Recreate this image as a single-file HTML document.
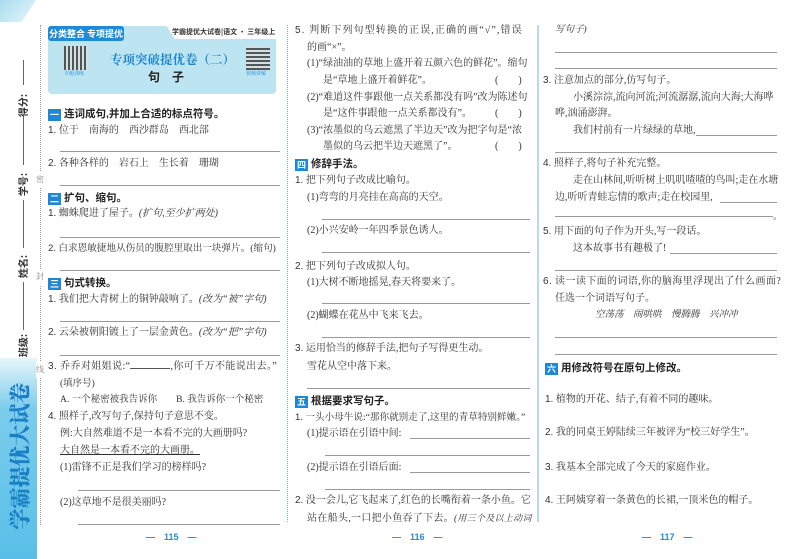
<!DOCTYPE html>
<html><head><meta charset="utf-8">
<style>
*{margin:0;padding:0;box-sizing:border-box}
body{width:800px;height:559px;overflow:hidden;background:#fff;position:relative;font-family:"Liberation Serif","Noto Serif CJK SC",serif;color:#333;font-size:10px}
.t{position:absolute;white-space:nowrap;line-height:16px;height:16px}
.l{position:absolute;height:1px;background:#9a9a9a}
.h{font-family:"Liberation Sans","Noto Sans CJK SC",sans-serif;font-weight:bold;color:#222;font-size:10.5px}
.b{display:inline-block;width:13px;height:12px;background:#1e88d8;color:#fff;font-size:9px;line-height:12px;text-align:center;margin-right:3px;vertical-align:-1px;font-family:"Noto Sans CJK SC",sans-serif}
.n{font-family:"Liberation Sans",sans-serif}
.pg{position:absolute;color:#2a8ad6;font-family:"Liberation Sans",sans-serif;font-size:9px;font-weight:bold}
.vl{position:absolute;width:1px;background:#666}
.lab{position:absolute;transform:rotate(-90deg);font-family:"Noto Sans CJK SC",sans-serif;font-weight:bold;font-size:10px;color:#333;white-space:nowrap}
</style></head><body>
<div style="position:absolute;left:0;top:0;width:36px;height:22px;background:linear-gradient(135deg,#a8dcef,#e8f6fb);clip-path:polygon(0 0,100% 0,60% 100%,0 100%)"></div>
<div style="position:absolute;left:0;top:358px;width:37px;height:201px;background:linear-gradient(180deg,#e6f6fb 0%,#7cccec 25%,#58bfe8 100%)"></div>
<div style="position:absolute;left:-58px;top:443px;width:155px;height:26px;transform:rotate(-90deg);font-family:'Noto Serif CJK SC',serif;font-weight:900;color:#1a7fc4;font-size:21px;line-height:26px;text-align:center;white-space:nowrap">学霸提优大试卷</div>
<div class="vl" style="left:23px;top:60px;height:25px"></div>
<div class="lab" style="left:11px;top:98px">得分:</div>
<div class="vl" style="left:23px;top:117px;height:48px"></div>
<div class="lab" style="left:11px;top:177px">学号:</div>
<div class="vl" style="left:23px;top:200px;height:48px"></div>
<div class="lab" style="left:11px;top:259px">姓名:</div>
<div class="vl" style="left:23px;top:282px;height:48px"></div>
<div class="lab" style="left:11px;top:338px">班级:</div>
<div style="position:absolute;left:40px;top:25px;height:500px;border-left:1px dotted #999"></div>
<div class="t" style="left:36px;top:172px;font-size:8px;color:#888;background:#fff">密</div>
<div class="t" style="left:36px;top:269px;font-size:8px;color:#888;background:#fff">封</div>
<div class="t" style="left:36px;top:362px;font-size:8px;color:#888;background:#fff">线</div>
<div style="position:absolute;left:287px;top:25px;height:497px;border-left:1px dotted #6ab8e8"></div>
<div style="position:absolute;left:537px;top:25px;height:497px;border-left:2px solid #b6dcf3"></div>

<div style="position:absolute;left:48px;top:26px;width:228px;height:68px;background:#bde5f1;border-radius:4px"></div>
<div style="position:absolute;left:48px;top:26px;width:76px;height:15px;background:#1e8ad8;border-radius:3px;color:#fff;font-family:'Noto Sans CJK SC',sans-serif;font-weight:bold;font-size:9px;line-height:15px;text-align:center">分类整合 专项提优</div>
<div style="position:absolute;left:166px;top:25px;width:112px;height:14px;background:#fff;clip-path:polygon(0 0,100% 0,100% 100%,8% 100%)"></div>
<div class="t" style="left:172px;top:26px;font-size:7px;line-height:12px;font-family:'Noto Sans CJK SC',sans-serif;font-weight:bold;color:#333">学霸提优大试卷|语文 · 三年级上</div>
<div style="position:absolute;left:64px;top:46px;width:24px;height:24px;background:repeating-linear-gradient(90deg,#333 0 2px,#ddd 2px 4px);opacity:.8"></div>
<div class="t" style="left:64px;top:71px;font-size:5px;line-height:8px;color:#1e88d8">专题训练</div>
<div style="position:absolute;left:246px;top:46px;width:24px;height:24px;background:repeating-linear-gradient(0deg,#333 0 2px,#ddd 2px 4px);opacity:.8"></div>
<div class="t" style="left:246px;top:71px;font-size:5px;line-height:8px;color:#1e88d8">视频讲解</div>
<div class="t" style="left:110px;top:50px;width:116px;text-align:center;font-size:12.5px;line-height:18px;color:#1a86d0;font-weight:bold;font-family:'Noto Serif CJK SC',serif">专项突破提优卷（二）</div>
<div class="t h" style="left:148px;top:68px;font-size:12px;line-height:18px">句　子</div>

<!-- col1 -->
<div class="t h" style="left:48px;top:106px"><span class="b">一</span>连词成句,并加上合适的标点符号。</div>
<div class="t" style="left:48px;top:123px"><span class="n">1.</span> 位于　南海的　西沙群岛　西北部</div>
<div class="l" style="left:60px;top:151px;width:220px"></div>
<div class="t" style="left:48px;top:156px"><span class="n">2.</span> 各种各样的　岩石上　生长着　珊瑚</div>
<div class="l" style="left:60px;top:185px;width:220px"></div>
<div class="t h" style="left:48px;top:190px"><span class="b">二</span>扩句、缩句。</div>
<div class="t" style="left:48px;top:206px"><span class="n">1.</span> 蜘蛛爬进了屋子。<i>(扩句,至少扩两处)</i></div>
<div class="l" style="left:60px;top:237px;width:220px"></div>
<div class="t" style="left:48px;top:241px;font-size:9.6px"><span class="n">2.</span> 白求恩敏捷地从伤员的腹腔里取出一块弹片。(缩句)</div>
<div class="l" style="left:60px;top:270px;width:220px"></div>
<div class="t h" style="left:48px;top:275px"><span class="b">三</span>句式转换。</div>
<div class="t" style="left:48px;top:292px"><span class="n">1.</span> 我们把大青树上的铜钟敲响了。<i>(改为“被”字句)</i></div>
<div class="l" style="left:60px;top:321px;width:220px"></div>
<div class="t" style="left:48px;top:325px"><span class="n">2.</span> 云朵被朝阳镀上了一层金黄色。<i>(改为“把”字句)</i></div>
<div class="l" style="left:60px;top:355px;width:220px"></div>
<div class="t" style="left:48px;top:359px;letter-spacing:.4px"><span class="n">3.</span> 乔乔对姐姐说:“<span style="display:inline-block;width:40px;border-bottom:1px solid #555"></span>,你可千万不能说出去。”</div>
<div class="t" style="left:60px;top:376px;font-size:9.5px">(填序号)</div>
<div class="t" style="left:60px;top:392px;font-size:9.5px">A. 一个秘密被我告诉你　　B. 我告诉你一个秘密</div>
<div class="t" style="left:48px;top:409px"><span class="n">4.</span> 照样子,改写句子,保持句子意思不变。</div>
<div class="t" style="left:60px;top:426px">例:大自然难道不是一本看不完的大画册吗?</div>
<div class="t" style="left:60px;top:443px;text-decoration:underline">大自然是一本看不完的大画册。</div>
<div class="t" style="left:60px;top:460px">(1)雷锋不正是我们学习的榜样吗?</div>
<div class="l" style="left:78px;top:490px;width:202px"></div>
<div class="t" style="left:60px;top:495px">(2)这草地不是很美丽吗?</div>
<div class="l" style="left:78px;top:524px;width:202px"></div>
<div class="pg" style="left:146px;top:530px">—　115　—</div>

<!-- col2 -->
<div class="t" style="left:295px;top:23px;letter-spacing:1.1px"><span class="n">5.</span> 判断下列句型转换的正误,正确的画“√”,错误</div>
<div class="t" style="left:307px;top:40px">的画“×”。</div>
<div class="t" style="left:307px;top:56px">(1)“绿油油的草地上盛开着五颜六色的鲜花”。缩句</div>
<div class="t" style="left:323px;top:73px">是“草地上盛开着鲜花”。</div><div class="t" style="left:495px;top:73px">(　　)</div>
<div class="t" style="left:307px;top:90px">(2)“难道这件事跟他一点关系都没有吗”改为陈述句</div>
<div class="t" style="left:323px;top:106px">是“这件事跟他一点关系都没有”。</div><div class="t" style="left:495px;top:106px">(　　)</div>
<div class="t" style="left:307px;top:123px">(3)“浓墨似的乌云遮黑了半边天”改为把字句是“浓</div>
<div class="t" style="left:323px;top:139px">墨似的乌云把半边天遮黑了”。</div><div class="t" style="left:495px;top:139px">(　　)</div>
<div class="t h" style="left:295px;top:156px"><span class="b">四</span>修辞手法。</div>
<div class="t" style="left:295px;top:173px"><span class="n">1.</span> 把下列句子改成比喻句。</div>
<div class="t" style="left:307px;top:190px">(1)弯弯的月亮挂在高高的天空。</div>
<div class="l" style="left:322px;top:219px;width:208px"></div>
<div class="t" style="left:307px;top:223px">(2)小兴安岭一年四季景色诱人。</div>
<div class="l" style="left:322px;top:252px;width:208px"></div>
<div class="t" style="left:295px;top:259px"><span class="n">2.</span> 把下列句子改成拟人句。</div>
<div class="t" style="left:307px;top:275px">(1)大树不断地摇晃,春天将要来了。</div>
<div class="l" style="left:322px;top:303px;width:208px"></div>
<div class="t" style="left:307px;top:308px">(2)蝴蝶在花丛中飞来飞去。</div>
<div class="l" style="left:322px;top:337px;width:208px"></div>
<div class="t" style="left:295px;top:341px"><span class="n">3.</span> 运用恰当的修辞手法,把句子写得更生动。</div>
<div class="t" style="left:307px;top:359px">雪花从空中落下来。</div>
<div class="l" style="left:307px;top:388px;width:223px"></div>
<div class="t h" style="left:295px;top:393px"><span class="b">五</span>根据要求写句子。</div>
<div class="t" style="left:295px;top:410px;font-size:9.6px"><span class="n">1.</span> 一头小母牛说:“那你就别走了,这里的青草特别鲜嫩。”</div>
<div class="t" style="left:307px;top:426px">(1)提示语在引语中间:</div>
<div class="l" style="left:410px;top:438px;width:120px"></div>
<div class="l" style="left:325px;top:455px;width:205px"></div>
<div class="t" style="left:307px;top:460px">(2)提示语在引语后面:</div>
<div class="l" style="left:410px;top:472px;width:120px"></div>
<div class="l" style="left:325px;top:489px;width:205px"></div>
<div class="t" style="left:295px;top:493px"><span class="n">2.</span> 没一会儿,它飞起来了,红色的长嘴衔着一条小鱼。它</div>
<div class="t" style="left:307px;top:510px;letter-spacing:.3px">站在船头,一口把小鱼吞了下去。<i style="font-size:9px">(用三个及以上动词</i></div>
<div class="pg" style="left:392px;top:530px">—　116　—</div>

<!-- col3 -->
<div class="t" style="left:555px;top:22px;font-size:9.5px"><i>写句子)</i></div>
<div class="l" style="left:555px;top:52px;width:222px"></div>
<div class="l" style="left:555px;top:68px;width:222px"></div>
<div class="t" style="left:543px;top:73px"><span class="n">3.</span> 注意加点的部分,仿写句子。</div>
<div class="t" style="left:573px;top:90px">小溪淙淙,流向河流;河流潺潺,流向大海;大海哗</div>
<div class="t" style="left:555px;top:106px">哗,汹涌澎湃。</div>
<div class="t" style="left:573px;top:123px">我们村前有一片绿绿的草地,</div>
<div class="l" style="left:696px;top:135px;width:81px"></div>
<div class="l" style="left:555px;top:152px;width:222px"></div>
<div class="t" style="left:543px;top:156px"><span class="n">4.</span> 照样子,将句子补充完整。</div>
<div class="t" style="left:573px;top:173px">走在山林间,听听树上叽叽喳喳的鸟叫;走在水塘</div>
<div class="t" style="left:555px;top:190px">边,听听青蛙忘情的歌声;走在校园里,</div>
<div class="l" style="left:720px;top:202px;width:57px"></div>
<div class="l" style="left:555px;top:216px;width:218px"></div><div class="t" style="left:773px;top:208px;font-size:9px">。</div>
<div class="t" style="left:543px;top:224px"><span class="n">5.</span> 用下面的句子作为开头,写一段话。</div>
<div class="t" style="left:573px;top:241px">这本故事书有趣极了!</div>
<div class="l" style="left:670px;top:253px;width:107px"></div>
<div class="l" style="left:555px;top:270px;width:222px"></div>
<div class="t" style="left:543px;top:274px;letter-spacing:.4px"><span class="n">6.</span> 读一读下面的词语,你的脑海里浮现出了什么画面?</div>
<div class="t" style="left:555px;top:291px">任选一个词语写句子。</div>
<div class="t" style="left:595px;top:307px;font-size:9.5px"><i>空荡荡　闹哄哄　慢腾腾　兴冲冲</i></div>
<div class="l" style="left:555px;top:337px;width:222px"></div>
<div class="l" style="left:555px;top:354px;width:222px"></div>
<div class="t h" style="left:545px;top:360px"><span class="b">六</span>用修改符号在原句上修改。</div>
<div class="t" style="left:545px;top:392px"><span class="n">1.</span> 植物的开花、结子,有着不同的趣味。</div>
<div class="t" style="left:545px;top:425px"><span class="n">2.</span> 我的同桌王婷陆续三年被评为“校三好学生”。</div>
<div class="t" style="left:545px;top:460px"><span class="n">3.</span> 我基本全部完成了今天的家庭作业。</div>
<div class="t" style="left:545px;top:493px"><span class="n">4.</span> 王阿姨穿着一条黄色的长裙,一顶米色的帽子。</div>
<div class="pg" style="left:642px;top:530px">—　117　—</div>
</body></html>
